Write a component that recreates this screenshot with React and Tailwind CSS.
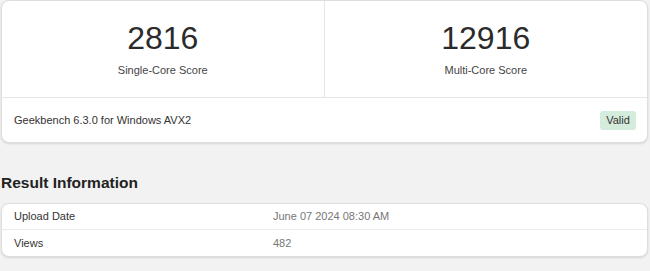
export default function App() {
  return (
    <div className="min-h-screen bg-[#f2f2f2] font-['Liberation_Sans',Arial,sans-serif] text-[#333]">
      <div className="ml-[1px] w-[647px]">
        <div className="rounded-[8px] border border-[#dedede] bg-white shadow-[0_1px_2px_rgba(0,0,0,0.12)]">
          <div className="grid h-[97px] grid-cols-2 border-b border-[#e6e6e6]">
            <div className="flex flex-col items-center border-r border-[#e6e6e6] pt-[21px]">
              <div className="text-[32px] leading-[32px] text-[#2b2b2b]">2816</div>
              <div className="mt-[9px] text-[11px] leading-[14px] text-[#444]">Single-Core Score</div>
            </div>
            <div className="flex flex-col items-center pt-[21px]">
              <div className="text-[32px] leading-[32px] text-[#2b2b2b]">12916</div>
              <div className="mt-[9px] text-[11px] leading-[14px] text-[#444]">Multi-Core Score</div>
            </div>
          </div>
          <div className="flex h-[44px] items-center justify-between pl-[12px] pr-[11px]">
            <span className="text-[11px] text-[#333]">Geekbench 6.3.0 for Windows AVX2</span>
            <span className="flex h-[19px] w-[36px] items-center justify-center rounded-[3px] bg-[#d4ecdc] text-[11px] text-[#333]">
              Valid
            </span>
          </div>
        </div>

        <h2 className="mt-[30px] text-[15.5px] font-bold leading-[20px] text-[#222]">Result Information</h2>

        <div className="mt-[10px] overflow-hidden rounded-[8px] border border-[#dedede] bg-white shadow-[0_1px_2px_rgba(0,0,0,0.12)]">
          <div className="grid h-[26px] grid-cols-[259px_1fr] items-center border-b border-[#ececec] px-[12px] text-[11px]">
            <span className="text-[#333]">Upload Date</span>
            <span className="text-[#777]">June 07 2024 08:30 AM</span>
          </div>
          <div className="grid h-[26px] grid-cols-[259px_1fr] items-center px-[12px] text-[11px]">
            <span className="text-[#333]">Views</span>
            <span className="text-[#777]">482</span>
          </div>
        </div>
      </div>
    </div>
  );
}
